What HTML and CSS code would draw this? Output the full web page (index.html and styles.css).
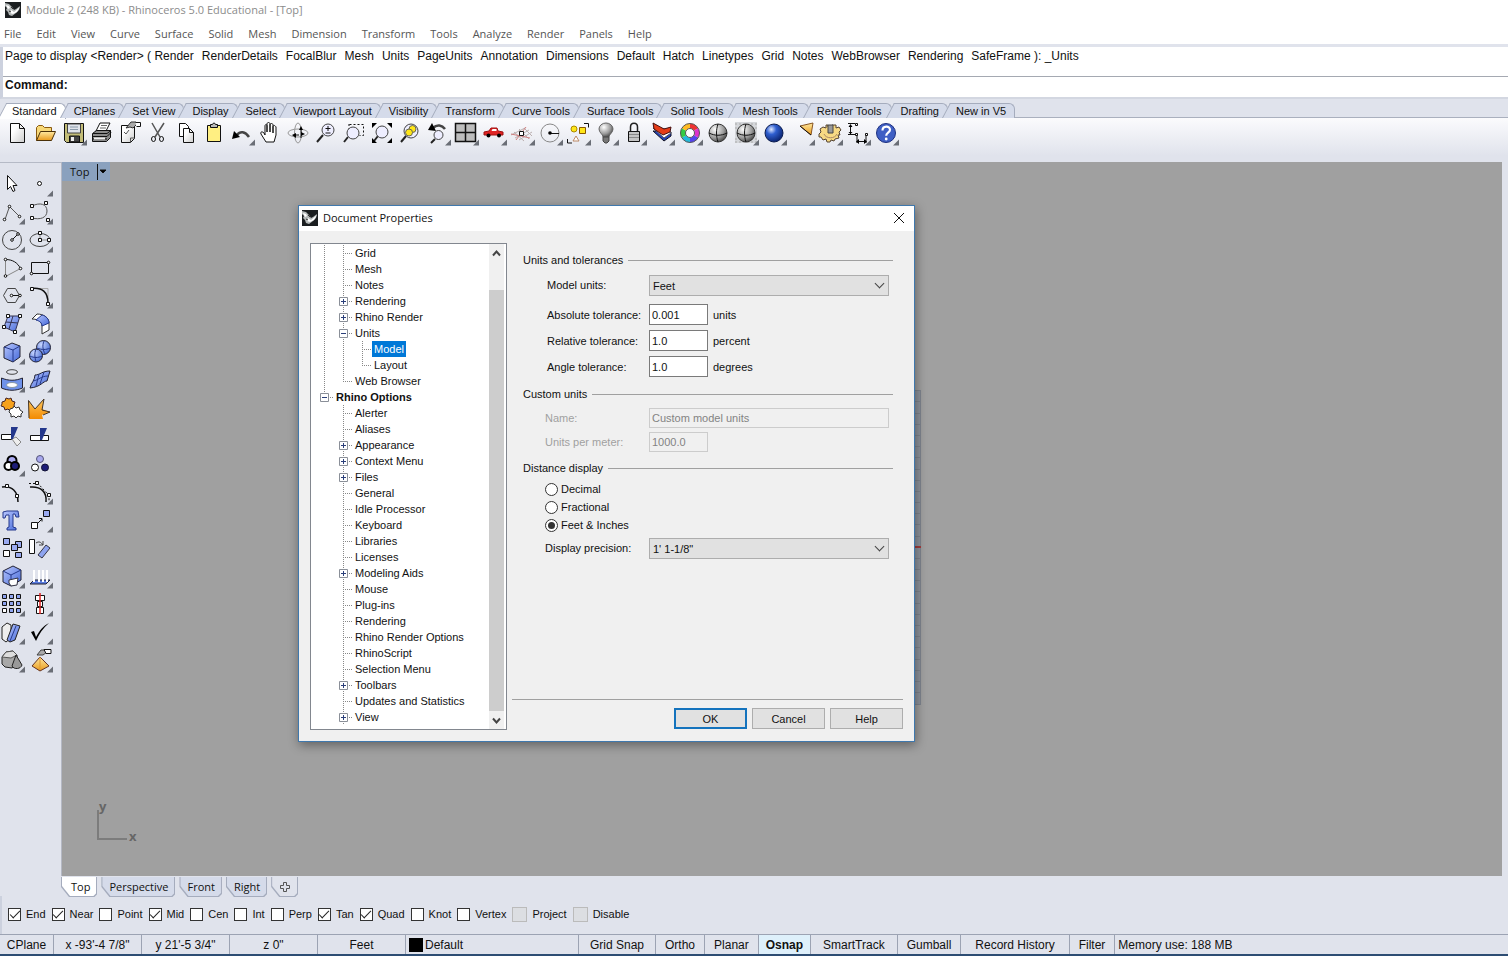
FILE: index.html
```html
<!DOCTYPE html>
<html lang="en">
<head>
<meta charset="utf-8">
<title>Module 2 (248 KB) - Rhinoceros 5.0 Educational - [Top]</title>
<link rel="stylesheet" href="styles.css">
</head>
<body>
<svg class="defs" width="0" height="0" aria-hidden="true">
  <defs>
    <linearGradient id="blue" x1="0" y1="0" x2="1" y2="1"><stop offset="0" stop-color="#b9c8ff"/><stop offset="1" stop-color="#4468d8"/></linearGradient>
    <linearGradient id="gold" x1="0" y1="0" x2="0" y2="1"><stop offset="0" stop-color="#ffe9a0"/><stop offset="1" stop-color="#e99a1c"/></linearGradient>
    <linearGradient id="flame" x1="0" y1="0" x2="0" y2="1"><stop offset="0" stop-color="#ffc860"/><stop offset="1" stop-color="#f28a00"/></linearGradient>
    <linearGradient id="paper" x1="0" y1="0" x2="1" y2="1"><stop offset="0.3" stop-color="#fff"/><stop offset="1" stop-color="#ccc"/></linearGradient>
    <radialGradient id="steel" cx="0.35" cy="0.3" r="0.8"><stop offset="0" stop-color="#fff"/><stop offset="0.6" stop-color="#999"/><stop offset="1" stop-color="#333"/></radialGradient>
    <radialGradient id="navy" cx="0.35" cy="0.3" r="0.8"><stop offset="0" stop-color="#dfe8ff"/><stop offset="0.35" stop-color="#2f5fd0"/><stop offset="1" stop-color="#051a60"/></radialGradient>
    <radialGradient id="ball" cx="0.35" cy="0.3" r="0.8"><stop offset="0" stop-color="#c8d6ff"/><stop offset="1" stop-color="#3c62d0"/></radialGradient>
  </defs>
  <symbol id="tri" viewBox="0 0 28 28"><path d="M25 20.500v6h-6z" fill="#6a6e76"/></symbol>
  <symbol id="rhino" viewBox="0 0 16 16"><path d="M0 0h16v16H0z" fill="#1b1e20"/><path d="M0 1l4 1 3 3 2 3 2-1 4-3-1 4-3 3-4 3-3-1-1-3-2-2 1-2-2-2z" fill="#b4b8b8"/><path d="M1 3l3 1 1 2-2 1zM6 8l3 2 6-5-3 5-4 2-3-1z" fill="#fff"/><path d="M6 5l2 2M4 9l2 1" stroke="#333" fill="none"/></symbol>
  <symbol id="v" viewBox="0 0 19 16"><path d="M9.500 0v16" class="dots"/></symbol>
  <symbol id="t" viewBox="0 0 19 16"><path d="M9.500 0v16M9 8.500h10" class="dots"/></symbol>
  <symbol id="l" viewBox="0 0 19 16"><path d="M9.500 0v9M9 8.500h10" class="dots"/></symbol>
  <symbol id="p" viewBox="0 0 19 16"><path d="M9.500 0v16M9 8.500h10" class="dots"/><path d="M5.500 4.500h8v8h-8z" fill="#fff" stroke="#8a8f98"/><path d="M7 8.500h5M9.500 6v5" stroke="#2b3f7a"/></symbol>
  <symbol id="m" viewBox="0 0 19 16"><path d="M9.500 0v16M9 8.500h10" class="dots"/><path d="M5.500 4.500h8v8h-8z" fill="#fff" stroke="#8a8f98"/><path d="M7 8.500h5" stroke="#2b3f7a"/></symbol>
  <symbol id="r" viewBox="0 0 19 16"><path d="M9.500 0v8M9 8.500h10" class="dots"/><path d="M5.500 4.500h8v8h-8z" fill="#fff" stroke="#8a8f98"/><path d="M7 8.500h5" stroke="#2b3f7a"/></symbol>
</svg>

<header class="titlebar"><svg class="logo"><use href="#rhino"/></svg><span>Module 2 (248 KB) - Rhinoceros 5.0 Educational - [Top]</span></header>
<nav class="menubar">
  <button>File</button><button>Edit</button><button>View</button><button>Curve</button><button>Surface</button><button>Solid</button><button>Mesh</button><button>Dimension</button><button>Transform</button><button>Tools</button><button>Analyze</button><button>Render</button><button>Panels</button><button>Help</button>
</nav>

<section class="command">
  <div class="history"><span>Page to display &lt;Render&gt; ( Render</span><span>RenderDetails</span><span>FocalBlur</span><span>Mesh</span><span>Units</span><span>PageUnits</span><span>Annotation</span><span>Dimensions</span><span>Default</span><span>Hatch</span><span>Linetypes</span><span>Grid</span><span>Notes</span><span>WebBrowser</span><span>Rendering</span><span>SafeFrame ): _Units</span></div>
  <div class="prompt"><label for="cmd">Command:</label><input id="cmd" type="text"></div>
</section>

<nav class="tabs">
  <button class="tab on">Standard</button><button class="tab">CPlanes</button><button class="tab">Set View</button><button class="tab">Display</button><button class="tab">Select</button><button class="tab">Viewport Layout</button><button class="tab">Visibility</button><button class="tab">Transform</button><button class="tab">Curve Tools</button><button class="tab">Surface Tools</button><button class="tab roomy">Solid Tools</button><button class="tab roomy">Mesh Tools</button><button class="tab roomy">Render Tools</button><button class="tab">Drafting</button><button class="tab">New in V5</button>
</nav>

<section class="toolbar">
  <button aria-label="New"><svg viewBox="0 0 28 28"><path d="M4.500 4.500h9l5 5v14h-14z" fill="url(#paper)" class="k"/><path d="M13.500 4.500v5h5" class="k"/></svg></button>
  <button aria-label="Open"><svg viewBox="0 0 28 28"><path d="M2.500 21.500v-13l2-2h4l2 2h7v4" fill="#f7d878" stroke="#8a5a10"/><path d="M2.500 21.500l4-9h15l-4 9z" fill="url(#gold)" stroke="#4a3008"/></svg></button>
  <button aria-label="Save"><svg viewBox="0 0 28 28"><path d="M2.500 4.500h19v19h-17l-2-2z" fill="#c3bd78" class="k"/><path d="M5.500 5v9h13V5z" fill="#dfe3ea" stroke="#444"/><path d="M8 8h8M8 10.500h8" stroke="#8a9aaa"/><path d="M7.500 23v-6h10v6z" fill="#444" class="k"/><path d="M9 18h3v4H9z" fill="#eee"/><use href="#tri"/></svg></button>
  <button aria-label="Print"><svg viewBox="0 0 28 28"><path d="M6 12l4-8h10l-4 8z" fill="#fff" class="k"/><path d="M11 6.500h6M10 9h6" stroke="#666"/><path d="M2.500 14.500l4-3h14v7l-4 4h-14z" fill="#8a8a8a" class="k"/><path d="M3 14.500h14l4-3M3 17.500h14l4-4M3 20h14" class="k"/><path d="M4 18.500h11v2H4z" fill="#eee"/></svg></button>
  <button aria-label="Document properties"><svg viewBox="0 0 28 28"><path d="M3.500 6.500h13v13l-4 4h-9z" fill="url(#paper)" class="k"/><path d="M12.500 23v-4h4M6 13l2 2 3-4" stroke="#555" fill="none"/><path d="M8 9l5-6h5l1 2-4 4-3-1z" fill="#aaa" stroke="#333"/><path d="M17.500 3.500h5v4h-4" fill="#fff" class="k"/></svg></button>
  <button aria-label="Cut"><svg viewBox="0 0 28 28"><path d="M6 4l8 14M18 4L9 18" stroke="#555" stroke-width="1.500"/><ellipse cx="7.500" cy="20" rx="2" ry="2.500" class="k"/><ellipse cx="15.500" cy="20" rx="2" ry="2.500" class="k"/></svg></button>
  <button aria-label="Copy"><svg viewBox="0 0 28 28"><path d="M5.500 4.500h6l3 3v10h-9z" fill="#fff" class="k"/><path d="M9.500 9.500h6l4 4v10h-10z" fill="url(#paper)" class="k"/><path d="M15.500 9.500v4h4" class="k"/></svg></button>
  <button aria-label="Paste"><svg viewBox="0 0 28 28"><path d="M5.500 6.500h13v16h-13z" fill="#ffef82" class="k"/><path d="M8.500 8.500v-3h2l1-1.500h1l1 1.500h2v3z" fill="#bbb" class="k"/></svg></button>
  <button aria-label="Undo"><svg viewBox="0 0 28 28"><path d="M7 16c3-4 8-4 12 2" fill="none" stroke="#444" stroke-width="2.500"/><path d="M2 20l2-8 6 6z"/><use href="#tri"/></svg></button>
  <button aria-label="Pan"><svg viewBox="0 0 28 28"><path d="M8 23l-5-8c-1-2 1-3 3-1l1 2V7c0-2 2-2 2 0v6-8c0-2 3-2 3 0v8-7c0-2 3-2 3 0v8-6c0-2 2-2 3 0v8l-2 7z" fill="#fff" class="k"/></svg></button>
  <button aria-label="Rotate view"><svg viewBox="0 0 28 28"><ellipse cx="12" cy="14" rx="10" ry="4" fill="none" stroke="#999"/><ellipse cx="12" cy="14" rx="3.500" ry="10" fill="none" stroke="#999"/><path d="M15 10v9M9 16h4" class="k"/><path d="M13 11h4l-2-4zM6 16l4-2v5zM15 13l4 2-4 2z"/></svg></button>
  <button aria-label="Zoom dynamic"><svg viewBox="0 0 28 28"><path d="M9 16l-6 7" class="k3"/><circle cx="14" cy="11" r="6" fill="#eef" stroke="#444"/><path d="M11.500 9.500h5M14 7v5M11.500 14h5" class="k"/></svg></button>
  <button aria-label="Zoom window"><svg viewBox="0 0 28 28"><path d="M7.500 5.500h14v11h-4M7 5v5" class="dash"/><path d="M6 18l-4 5" class="k3"/><circle cx="11" cy="14" r="6" fill="#eef" stroke="#444"/></svg></button>
  <button aria-label="Zoom extents"><svg viewBox="0 0 28 28"><path d="M8 17l-4 5" class="k3"/><circle cx="12" cy="13" r="6" fill="#eef" stroke="#444"/><path d="M2 4h5l-5 5zM22 4v5l-5-5zM2 24v-5l5 5zM22 24h-5l5-5z"/></svg></button>
  <button aria-label="Zoom selected"><svg viewBox="0 0 28 28"><path d="M8 17l-5 6" class="k3"/><circle cx="13" cy="12" r="7" fill="#eef" stroke="#444"/><circle cx="14.500" cy="10" r="3.500" fill="#ffe617" stroke="#665"/><circle cx="11" cy="13.500" r="3.500" fill="#ffe617" stroke="#665"/></svg></button>
  <button aria-label="Undo view"><svg viewBox="0 0 28 28"><path d="M7 9c4-4 9-3 12 1" fill="none" stroke="#444" stroke-width="2.500"/><path d="M2 11l4-7 4 8z"/><path d="M9 20l-4 4" class="k3"/><circle cx="12.500" cy="16" r="4.500" fill="#eef" stroke="#444"/><use href="#tri"/></svg></button>
  <button aria-label="Four viewports"><svg viewBox="0 0 28 28"><path d="M1.500 4.500h20v18h-20zM11.500 4v18M1 13.500h20" fill="#bdbdbd" class="k2"/><use href="#tri"/></svg></button>
  <button aria-label="Right view"><svg viewBox="0 0 28 28"><path d="M2 16v-3l5-1 2-3h6l1 3 5 1v3z" fill="#e02424" stroke="#a01010"/><path d="M9.500 12l1-2h4v2z" fill="#fff"/><circle cx="6.500" cy="16.500" r="2"/><circle cx="17" cy="16.500" r="2"/><use href="#tri"/></svg></button>
  <button aria-label="Set CPlane"><svg viewBox="0 0 28 28"><path d="M1 16l14-7M5 19l14-8M9 21l13-8M4 13l10 9M9 10l10 10M14 9l8 8" fill="none" stroke="#bbb0b0"/><path d="M1 15l19 4M6 21L16 8" stroke="#d08080"/><path d="M9.500 12.500h4v4h-4z" fill="#fff" class="k"/><use href="#tri"/></svg></button>
  <button aria-label="Object snap"><svg viewBox="0 0 28 28"><circle cx="12" cy="14" r="9" fill="none" stroke="#888"/><path d="M12 14.500h9" class="k"/><circle cx="12" cy="14" r="1.800"/><use href="#tri"/></svg></button>
  <button aria-label="Select objects"><svg viewBox="0 0 28 28"><path d="M18 4.500h4.500v4M1.500 20v4H6" class="k"/><circle cx="8" cy="10" r="3" fill="#ffe617" stroke="#a80"/><path d="M13.500 8.500h6v6h-6z" fill="#ffe617" stroke="#850"/><path d="M10 17l3 5H7z" fill="#fff" stroke="#b86"/><use href="#tri"/></svg></button>
  <button aria-label="Hide"><svg viewBox="0 0 28 28"><path d="M9 18c0-3-4-4-4-8a7 6 0 0 1 14 0c0 4-4 5-4 8z" fill="url(#steel)" stroke="#666"/><path d="M9 18h6v4l-2 2h-2l-2-2z" fill="#777" stroke="#444"/><use href="#tri"/></svg></button>
  <button aria-label="Lock"><svg viewBox="0 0 28 28"><path d="M8.500 13V8c0-5 7-5 7 0v5" fill="none" stroke="#222" stroke-width="1.500"/><path d="M6.500 12.500h11v10h-11z" fill="#c4c4c4" class="k"/><path d="M7 15.500h10M7 18.500h10" stroke="#888"/><use href="#tri"/></svg></button>
  <button aria-label="Layers"><svg viewBox="0 0 28 28"><path d="M3 12l11 10 7-5V13z" fill="#2342b8" stroke="#112"/><path d="M3 9l11 10 7-5-3-4z" fill="#fff" stroke="#556"/><path d="M3 4l11 6 7-2-1 5-7 3L4 10z" fill="#e53c18" stroke="#411"/><use href="#tri"/></svg></button>
  <button aria-label="Object properties"><svg viewBox="0 0 28 28"><g fill="none" stroke-width="5"><path d="M12 7a7 7 0 0 1 6 3.500" stroke="#e33"/><path d="M18 10.500a7 7 0 0 1 0 7" stroke="#d3c"/><path d="M18 17.500a7 7 0 0 1-6 3.500" stroke="#54e"/><path d="M12 21a7 7 0 0 1-6-3.500" stroke="#2bd"/><path d="M6 17.500a7 7 0 0 1 0-7" stroke="#3c4"/><path d="M6 10.500a7 7 0 0 1 6-3.500" stroke="#fb2"/></g><circle cx="12" cy="14" r="9.500" fill="none" stroke="#555"/><circle cx="12" cy="14" r="4.500" stroke="#555" fill="#fff"/><use href="#tri"/></svg></button>
  <button aria-label="Shade"><svg viewBox="0 0 28 28"><circle cx="12" cy="14" r="9" fill="url(#steel)" stroke="#333"/><path d="M3 14c6 3 12 3 18 0M12 5c-2 6-2 12 0 18" class="k"/></svg></button>
  <button aria-label="Render preview"><svg viewBox="0 0 28 28"><path d="M1 3h22v21H1z" fill="#d4d6da"/><path d="M1 5h22M1 9h22M1 20h22M1 23h22" class="dash pale"/><circle cx="12" cy="14" r="9" fill="url(#steel)" stroke="#333"/><path d="M3 14c6 3 12 3 18 0M12 5c-2 6-2 12 0 18" class="k"/><use href="#tri"/></svg></button>
  <button aria-label="Render"><svg viewBox="0 0 28 28"><circle cx="12" cy="14" r="9" fill="url(#navy)" stroke="#0a1c50"/><use href="#tri"/></svg></button>
  <button aria-label="Spotlight"><svg viewBox="0 0 28 28"><path d="M10 7l13-3-2 12z" fill="url(#gold)" stroke="#852"/><path d="M10 7l6 5 5 4" class="k"/><use href="#tri"/></svg></button>
  <button aria-label="Options"><svg viewBox="0 0 28 28"><path d="M8 6h2v2h4V6h4v3l3-1 2 3-2 2 1 3h-2l1 3-4 1-1 2-3-1-1 2h-3l-1-3-3 1-2-3H1v-3l2-2-1-3 3-2 3 1z" fill="#f7d983" stroke="#543"/><path d="M10 6h5v8h-5z" fill="#999" stroke="#444"/><path d="M6 15c2 5 11 5 13 0" fill="none" stroke="#a86"/><use href="#tri"/></svg></button>
  <button aria-label="Dimension"><svg viewBox="0 0 28 28"><path d="M2 4.500h7M4.500 6v9M2 15.500h7M11 15v9M20 16v8M11 22.500h9" class="k"/><path d="M2.500 8l2-3 2 3zM2.500 13l2 2 2-2zM13 20v5l-3-2.500zM18 20v5l3-2.500z"/><path d="M9.500 4.500h2v2h-2zM9.500 14.500h2v2h-2zM19.500 14.500h2v2h-2z" fill="#fff" class="k"/><use href="#tri"/></svg></button>
  <button aria-label="Help"><svg viewBox="0 0 28 28"><circle cx="12" cy="14" r="9.500" fill="#3f5fc4" stroke="#1c2f80"/><path d="M8.500 11.500c0-5 7.500-5 7.500-.8 0 3-3.800 3-3.800 6" fill="none" stroke="#fff" stroke-width="2.200"/><circle cx="12.200" cy="20" r="1.400" fill="#fff"/><use href="#tri"/></svg></button>
</section>

<main class="work">
  <aside class="palette">
    <button aria-label="Select"><svg viewBox="0 0 28 28"><path d="M7.500 5.500v14l3-3 2.500 5 2-1-2-5h4z" fill="#fff" class="k"/></svg></button>
    <button aria-label="Point"><svg viewBox="0 0 28 28"><circle cx="11.500" cy="13.500" r="2" fill="#fff" class="k"/><use href="#tri"/></svg></button>
    <button aria-label="Polyline"><svg viewBox="0 0 28 28"><path d="M5 21.500L9.500 8.500l10 10" fill="none" stroke="#555"/><g fill="#fff" class="k"><circle cx="4.500" cy="21.500" r="1.300"/><circle cx="9.500" cy="8.500" r="1.300"/><circle cx="19.500" cy="18.500" r="1.300"/></g><use href="#tri"/></svg></button>
    <button aria-label="Curve"><svg viewBox="0 0 28 28"><path d="M4 8c8-4 15-2 15 5s-7 9-15 7" fill="none" stroke="#555"/><path d="M2.500 6.500h3v3h-3zM16.500 3.500h3v3h-3zM2.500 18.500h3v3h-3zM18.500 20.500h3v3h-3z" fill="#fff" class="k"/><use href="#tri"/></svg></button>
    <button aria-label="Circle"><svg viewBox="0 0 28 28"><circle cx="12" cy="14" r="9.500" fill="none" stroke="#444"/><path d="M12 14l6-6" class="k"/><circle cx="12" cy="14" r="1.300" fill="#fff" class="k"/><circle cx="18" cy="8" r="1.300" fill="#fff" class="k"/><use href="#tri"/></svg></button>
    <button aria-label="Ellipse"><svg viewBox="0 0 28 28"><ellipse cx="12" cy="14" rx="10" ry="6.500" fill="none" stroke="#444"/><path d="M12 7v7h9" fill="none" stroke="#888"/><path d="M10.500 5.500h3v3h-3zM10.500 12.500h3v3h-3zM19.500 12.500h3v3h-3z" fill="#fff" class="k"/><use href="#tri"/></svg></button>
    <button aria-label="Arc"><svg viewBox="0 0 28 28"><path d="M5.500 5.500v17l15-8" fill="none" stroke="#888"/><path d="M5.500 5.500c7 0 12 3 15 9" class="k"/><g fill="#fff" class="k"><circle cx="5.500" cy="5.500" r="1.300"/><circle cx="5.500" cy="22" r="1.300"/><circle cx="20.500" cy="14.500" r="1.300"/></g><use href="#tri"/></svg></button>
    <button aria-label="Rectangle"><svg viewBox="0 0 28 28"><path d="M3.500 8.500h17v11h-17z" class="k"/><circle cx="20.500" cy="8.500" r="1.300" fill="#fff" class="k"/><circle cx="3.500" cy="19.500" r="1.300" fill="#fff" class="k"/><use href="#tri"/></svg></button>
    <button aria-label="Polygon"><svg viewBox="0 0 28 28"><path d="M3.500 13.500l4-7h8l4 7-4 7h-8z" fill="none" stroke="#444"/><path d="M12 13.500h8" class="k"/><circle cx="11.500" cy="13.500" r="1.300" fill="#fff" class="k"/><circle cx="20" cy="13.500" r="1.300" fill="#fff" class="k"/><use href="#tri"/></svg></button>
    <button aria-label="Fillet"><svg viewBox="0 0 28 28"><path d="M4 6.500h16v15" fill="none" stroke="#aaa"/><path d="M4 6.500c10-1 16 3 16 15" class="k2"/><path d="M2.500 5.500h3v3h-3zM18.500 20.500h3v3h-3z" fill="#fff" class="k"/><use href="#tri"/></svg></button>
    <button aria-label="Surface from points"><svg viewBox="0 0 28 28"><path d="M8 6h12l-5 16-11-5z" fill="url(#blue)" stroke="#335"/><path d="M13 6L9 19M6 12l12 1" fill="none" stroke="#335"/><path d="M6.500 4.500h3v3h-3zM18.500 4.500h3v3h-3zM2.500 15.500h3v3h-3zM13.500 20.500h3v3h-3z" fill="#fff" class="k"/><use href="#tri"/></svg></button>
    <button aria-label="Extrude curve"><svg viewBox="0 0 28 28"><path d="M4 9l5-5c7 0 12 4 12 9v7l-7 4v-8c0-4-4-7-10-7z" fill="#fff" stroke="#333"/><path d="M8 10l6-5c4 1 7 4 7 8l-7 3c0-3-2-5-6-6z" fill="url(#blue)" stroke="#24388c"/><use href="#tri"/></svg></button>
    <button aria-label="Box"><svg viewBox="0 0 28 28"><path d="M4 9l8-4 8 3v11l-7 5-9-4z" fill="url(#blue)" stroke="#223"/><path d="M4 9l9 3 7-4M13 12v12" fill="none" stroke="#24388c"/><use href="#tri"/></svg></button>
    <button aria-label="Boolean union"><svg viewBox="0 0 28 28"><circle cx="15.500" cy="9.500" r="7" fill="url(#ball)" stroke="#223"/><circle cx="8" cy="17.500" r="6.500" fill="url(#ball)" stroke="#223"/><path d="M9 10c5 2 9 2 13 0M16 3c-2 5-1 9 1 13M2 18c4 2 8 2 12 0M8 11c-2 5-1 9 0 13" fill="none" stroke="#24388c"/><use href="#tri"/></svg></button>
    <button aria-label="Project to surface"><svg viewBox="0 0 28 28"><ellipse cx="12" cy="6" rx="5.500" ry="2.300" fill="none" stroke="#444"/><path d="M1.500 12c7 3 14 3 21 0v10c-7 3-14 3-21 0z" fill="#6f92ea" stroke="#223"/><ellipse cx="12" cy="19" rx="5.500" ry="2.500" fill="#fff" stroke="#89a"/><use href="#tri"/></svg></button>
    <button aria-label="Mesh"><svg viewBox="0 0 28 28"><path d="M7 9c5 0 7-4 15-4l-3 10c-4 0-6 6-17 7 1-5 5-8 5-13z" fill="url(#blue)" stroke="#223"/><path d="M11 8l-3 12M16 6l-4 12M5 15c6-1 8-5 15-5" fill="none" stroke="#24388c"/><use href="#tri"/></svg></button>
    <button aria-label="Join"><svg viewBox="0 0 28 28"><path d="M2 8l3-1 1-3 3 1 2-1 1 3 3 1-1 3 1 3-3 1-2 2-2-2-3 1-1-3-3-1 1-2z" fill="#f5a11c" stroke="#422"/><path d="M10 15l3-1 1-2 2 2 3-1 1 3 3 2-2 2v3l-3-1-2 2-2-2-3 1v-3l-2-2z" fill="#fff" stroke="#333"/></svg></button>
    <button aria-label="Explode"><svg viewBox="0 0 28 28"><path d="M1 25L.5 6.500 7 15l9-10-2 10 8 3-8 3 1 4z" fill="url(#flame)"/><path d="M1 24L.5 6.500 7 15l9-10-2 11 8 2-7 3" fill="none" stroke="#432"/></svg></button>
    <button aria-label="Trim"><svg viewBox="0 0 28 28"><path d="M1.500 12.500h10v5h-10z" fill="#fff" class="k"/><path d="M12 17l4-2 5 5-4 4z" fill="#eee" stroke="#888"/><path d="M11 5h7l-5 12h-2z" fill="#24388c"/></svg></button>
    <button aria-label="Split"><svg viewBox="0 0 28 28"><path d="M2.500 13.500h18v5h-18z" fill="#fff" class="k"/><path d="M12 6h7l-5 12h-2z" fill="#24388c"/></svg></button>
    <button aria-label="Group"><svg viewBox="0 0 28 28"><g stroke="#000" stroke-width="2"><circle cx="12" cy="10.500" r="4.500" fill="#a8a8ee"/><circle cx="8.500" cy="16" r="4" fill="#fff"/><circle cx="15" cy="16" r="4" fill="#1d1d78"/></g><use href="#tri"/></svg></button>
    <button aria-label="Ungroup"><svg viewBox="0 0 28 28"><circle cx="12" cy="9" r="3.500" fill="#a8a8ee" stroke="#557"/><circle cx="7" cy="17.500" r="3.500" fill="#fff" class="k"/><circle cx="17" cy="17.500" r="3.500" fill="#1d1d78" stroke="#113"/></svg></button>
    <button aria-label="Edit points"><svg viewBox="0 0 28 28"><path d="M2 9c10-2 16 5 16 15" class="k2"/><path d="M5.500 6.500h3v3h-3zM15.500 16.500h3v3h-3z" fill="#fff" class="k"/></svg></button>
    <button aria-label="Control points"><svg viewBox="0 0 28 28"><path d="M2 9c11-1 17 5 16 15" class="k2"/><path d="M1 5.500h9l11 12v6" class="dash"/><path d="M7.500 3.500h3v3h-3zM19.500 15.500h3v3h-3z" fill="#fff" class="k"/><use href="#tri"/></svg></button>
    <button aria-label="Text"><svg viewBox="0 0 28 28"><path d="M3 6l4-1h11l1 6h-3l-1-3h-2v13l3 1v2H7v-2l2-1V9H6l-1 3H3z" fill="url(#blue)" stroke="#24388c"/></svg></button>
    <button aria-label="Move"><svg viewBox="0 0 28 28"><path d="M9 18l5-5M11 12.500h3v3" class="k"/><path d="M15.500 4.500h6v6h-6z" fill="#9aaaf0" class="k"/><path d="M3.500 16.500h6v6h-6z" fill="#fff" class="k"/><use href="#tri"/></svg></button>
    <button aria-label="Copy objects"><svg viewBox="0 0 28 28"><g class="k"><path d="M3.500 4.500h6v6h-6zM15.500 7.500h6v6h-6z" fill="#9aaaf0"/><path d="M11.500 10.500h6v6h-6zM15.500 18.500h6v5h-6z" fill="#9aaaf0"/><path d="M3.500 16.500h6v6h-6z" fill="#fff"/></g></svg></button>
    <button aria-label="Rotate"><svg viewBox="0 0 28 28"><path d="M1.500 5.500h5v14h-5z" fill="#fff" class="k"/><path d="M8 9c3-2 5-1 7 2M15 7v4h-4" fill="none" stroke="#444"/><path d="M18 11l4 3-8 10-4-3z" fill="#8ea4f0" stroke="#334"/></svg></button>
    <button aria-label="Solid edit"><svg viewBox="0 0 28 28"><path d="M3 9l10-5 8 4v10l-10 6-8-4z" fill="url(#blue)" stroke="#223"/><path d="M3 9l8 4 10-5M11 13v11" fill="none" stroke="#24388c"/><path d="M9 18l9-2-1 7-6 1-2-3z" fill="#fff" stroke="#334"/><use href="#tri"/></svg></button>
    <button aria-label="Project"><svg viewBox="0 0 28 28"><path d="M2 22l4-4h16l-4 4z" fill="#5a7ce0" stroke="#223"/><path d="M6 8v12M11 8v12M15 8v12M19 8v12" stroke="#fff" stroke-width="2"/><use href="#tri"/></svg></button>
    <button aria-label="Array"><svg viewBox="0 0 28 28"><path d="M2.500 4.500h4v4h-4zM9.500 4.500h4v4h-4zM16.500 4.500h4v4h-4zM2.500 11.500h4v4h-4zM9.500 11.500h4v4h-4zM16.500 11.500h4v4h-4zM9.500 18.500h4v4h-4zM16.500 18.500h4v4h-4z" fill="#8ea4f0" class="k"/><path d="M2.500 18.500h4v4h-4z" fill="#fff" class="k"/><use href="#tri"/></svg></button>
    <button aria-label="Align"><svg viewBox="0 0 28 28"><path d="M7.500 5.500h9v5h-9zM9.500 11.500h5v5h-5zM8.500 17.500h7v6h-7z" fill="#fff" class="k"/><path d="M12 3v21" stroke="#d22" stroke-width="1.500"/><use href="#tri"/></svg></button>
    <button aria-label="Bend"><svg viewBox="0 0 28 28"><path d="M2 9l5-4 4 2v13l-5 4-4-3z" fill="#eee" stroke="#222"/><path d="M13 6l7 2-5 14-5 2-3-2z" fill="url(#blue)" stroke="#222"/><path d="M16 8l-6 15" stroke="#24388c"/><use href="#tri"/></svg></button>
    <button aria-label="Check"><svg viewBox="0 0 28 28"><path d="M3 14l3-1 2 6c4-7 7-11 13-14C15 10 11 16 8 23z"/><use href="#tri"/></svg></button>
    <button aria-label="Primitives"><svg viewBox="0 0 28 28"><path d="M2 11l4-5 7-1 4 4v9l-5 4-7-1-3-3z" fill="#a8a8a8" stroke="#222"/><path d="M2 11l4-5 7-1 4 4-6 3z" fill="#ddd" stroke="#555"/><path d="M16 9l6 10c-1 4-8 5-10 1z" fill="#999" stroke="#222"/><use href="#tri"/></svg></button>
    <button aria-label="Pyramid"><svg viewBox="0 0 28 28"><path d="M4 20l8-9 9 9-9 5z" fill="url(#gold)" stroke="#632"/><path d="M12 11v13" stroke="#d93"/><path d="M9 9l4-5h4l2 2-4 3z" fill="#aaa" stroke="#444"/><path d="M16 3.500h7v4h-5z" fill="#fff" class="k"/><use href="#tri"/></svg></button>
  </aside>
  <section class="viewport">
    <button class="vtitle"><span>Top</span><svg viewBox="0 0 10 16"><path d="M.5 0v16"/><path d="M3 6h6L6 9z"/></svg></button>
    <svg class="grid" viewBox="0 0 8 316" preserveAspectRatio="none"><path d="M0 0h7v315H0z" fill="#8e939d"/><path d="M0 .5h7M0 11.500h7M0 23.500h7M0 34.500h7M0 45.500h7M0 56.500h7M0 67.500h7M0 79.500h7M0 90.500h7M0 101.500h7M0 112.500h7M0 123.500h7M0 134.500h7M0 146.500h7M0 168.500h7M0 179.500h7M0 190.500h7M0 201.500h7M0 213.500h7M0 224.500h7M0 235.500h7M0 246.500h7M0 257.500h7M0 269.500h7M0 280.500h7M0 291.500h7M0 302.500h7M0 314.500h7M6.500 0v315" stroke="#7f858f"/><path d="M0 157h7" stroke="#a33c3c" stroke-width="2"/></svg>
    <svg class="axes" viewBox="0 0 50 50"><path d="M6 12v29h29" fill="none" stroke="#7c7c7c" stroke-width="2"/><text x="7" y="13">y</text><text x="37" y="43">x</text></svg>
  </section>
</main>

<nav class="vtabs"><button class="vtab on">Top</button><button class="vtab">Perspective</button><button class="vtab">Front</button><button class="vtab">Right</button><button class="vtab add" aria-label="New viewport"><svg viewBox="0 0 10 10"><path d="M3.500.5h3v3h3v3h-3v3h-3v-3h-3v-3h3z"/></svg></button></nav>

<section class="osnap">
  <label><input type="checkbox" checked>End</label><label><input type="checkbox" checked>Near</label><label><input type="checkbox">Point</label><label><input type="checkbox" checked>Mid</label><label><input type="checkbox">Cen</label><label><input type="checkbox">Int</label><label><input type="checkbox">Perp</label><label><input type="checkbox" checked>Tan</label><label><input type="checkbox" checked>Quad</label><label><input type="checkbox">Knot</label><label><input type="checkbox">Vertex</label><label><input type="checkbox" disabled>Project</label><label><input type="checkbox" disabled>Disable</label>
</section>

<footer class="status">
  <button class="cell first">CPlane</button><span class="cell coord">x -93'-4 7/8"</span><span class="cell coord">y 21'-5 3/4"</span><span class="cell coord">z 0"</span><span class="cell coord">Feet</span><button class="cell layer"><i></i>Default</button><button class="cell">Grid Snap</button><button class="cell snug">Ortho</button><button class="cell snug">Planar</button><button class="cell on">Osnap</button><button class="cell mid">SmartTrack</button><button class="cell snug">Gumball</button><button class="cell wide">Record History</button><button class="cell snug">Filter</button><span class="cell memory">Memory use: 188 MB</span>
</footer>

<form class="dialog" role="dialog" aria-labelledby="dlg">
  <header class="dhead"><svg class="logo"><use href="#rhino"/></svg><h1 id="dlg">Document Properties</h1><button type="button" class="close" aria-label="Close"><svg viewBox="0 0 12 12"><path d="M1 1l10 10M11 1L1 11"/></svg></button></header>
  <div class="dbody">
    <div class="treebox">
      <ul class="tree">
        <li><svg><use href="#v"/></svg><svg><use href="#t"/></svg><span>Grid</span></li>
        <li><svg><use href="#v"/></svg><svg><use href="#t"/></svg><span>Mesh</span></li>
        <li><svg><use href="#v"/></svg><svg><use href="#t"/></svg><span>Notes</span></li>
        <li><svg><use href="#v"/></svg><svg><use href="#p"/></svg><span>Rendering</span></li>
        <li><svg><use href="#v"/></svg><svg><use href="#p"/></svg><span>Rhino Render</span></li>
        <li><svg><use href="#v"/></svg><svg><use href="#m"/></svg><span>Units</span></li>
        <li><svg><use href="#v"/></svg><svg><use href="#v"/></svg><svg><use href="#t"/></svg><span class="sel">Model</span></li>
        <li><svg><use href="#v"/></svg><svg><use href="#v"/></svg><svg><use href="#l"/></svg><span>Layout</span></li>
        <li><svg><use href="#v"/></svg><svg><use href="#l"/></svg><span>Web Browser</span></li>
        <li><svg><use href="#r"/></svg><span class="root">Rhino Options</span></li>
        <li><svg></svg><svg><use href="#t"/></svg><span>Alerter</span></li>
        <li><svg></svg><svg><use href="#t"/></svg><span>Aliases</span></li>
        <li><svg></svg><svg><use href="#p"/></svg><span>Appearance</span></li>
        <li><svg></svg><svg><use href="#p"/></svg><span>Context Menu</span></li>
        <li><svg></svg><svg><use href="#p"/></svg><span>Files</span></li>
        <li><svg></svg><svg><use href="#t"/></svg><span>General</span></li>
        <li><svg></svg><svg><use href="#t"/></svg><span>Idle Processor</span></li>
        <li><svg></svg><svg><use href="#t"/></svg><span>Keyboard</span></li>
        <li><svg></svg><svg><use href="#t"/></svg><span>Libraries</span></li>
        <li><svg></svg><svg><use href="#t"/></svg><span>Licenses</span></li>
        <li><svg></svg><svg><use href="#p"/></svg><span>Modeling Aids</span></li>
        <li><svg></svg><svg><use href="#t"/></svg><span>Mouse</span></li>
        <li><svg></svg><svg><use href="#t"/></svg><span>Plug-ins</span></li>
        <li><svg></svg><svg><use href="#t"/></svg><span>Rendering</span></li>
        <li><svg></svg><svg><use href="#t"/></svg><span>Rhino Render Options</span></li>
        <li><svg></svg><svg><use href="#t"/></svg><span>RhinoScript</span></li>
        <li><svg></svg><svg><use href="#t"/></svg><span>Selection Menu</span></li>
        <li><svg></svg><svg><use href="#p"/></svg><span>Toolbars</span></li>
        <li><svg></svg><svg><use href="#t"/></svg><span>Updates and Statistics</span></li>
        <li><svg></svg><svg><use href="#p"/></svg><span>View</span></li>
      </ul>
      <div class="scroll"><button type="button" aria-label="Scroll up"><svg viewBox="0 0 9 9"><path d="M1 6.500l3.500-4 3.500 4"/></svg></button><i></i><button type="button" aria-label="Scroll down"><svg viewBox="0 0 9 9"><path d="M1 2.500l3.500 4 3.500-4"/></svg></button></div>
    </div>
    <div class="pane">
      <div class="groups">
        <h2>Units and tolerances</h2>
        <div class="fields">
          <label for="units">Model units:</label><div class="combo"><select id="units"><option>Feet</option></select></div>
          <label for="abs">Absolute tolerance:</label><div class="val"><input id="abs" type="text" value="0.001">units</div>
          <label for="rel">Relative tolerance:</label><div class="val"><input id="rel" type="text" value="1.0">percent</div>
          <label for="ang">Angle tolerance:</label><div class="val"><input id="ang" type="text" value="1.0">degrees</div>
        </div>
        <h2>Custom units</h2>
        <div class="fields off">
          <label for="nm">Name:</label><div class="val"><input id="nm" class="full" type="text" value="Custom model units" disabled></div>
          <label for="upm">Units per meter:</label><div class="val"><input id="upm" type="text" value="1000.0" disabled></div>
        </div>
        <h2>Distance display</h2>
        <div class="radios">
          <label><input type="radio" name="dd">Decimal</label>
          <label><input type="radio" name="dd">Fractional</label>
          <label><input type="radio" name="dd" checked>Feet &amp; Inches</label>
        </div>
        <div class="fields last"><label for="prec">Display precision:</label><div class="combo"><select id="prec"><option>1' 1-1/8"</option></select></div></div>
      </div>
      <div class="actions"><button type="button" class="ok">OK</button><button type="button">Cancel</button><button type="button">Help</button></div>
    </div>
  </div>
</form>
</body>
</html>
```
FILE: styles.css
```css
* { box-sizing: border-box; }
body {
  margin: 0;
  min-height: 100vh;
  position: relative;
  display: flex;
  flex-direction: column;
  background: #e0e3ec;
  color: #111;
  font: 11px/16px "Liberation Sans", Arial, sans-serif;
}
button { margin: 0; padding: 0; border: 0; background: none; color: inherit; font: inherit; }
input, select { font: inherit; color: inherit; margin: 0; }
svg { display: block; }
.defs { position: absolute; }
.dots { fill: none; stroke: #888; stroke-dasharray: 1 1; }
.k { stroke: #111; }
.k:not([fill]) { fill: none; }
.k2 { stroke: #111; stroke-width: 1.5; }
.k2:not([fill]) { fill: none; }
.k3 { stroke: #222; stroke-width: 2; fill: none; }
.dash { stroke: #111; fill: none; stroke-dasharray: 2 2; }
.dash.pale { stroke: #aaa; }
.logo { width: 16px; height: 16px; }

.titlebar {
  display: flex; align-items: center; gap: 5px; height: 20px; padding-left: 5px;
  background: #fff; color: #8c8c8c; font: 11px/20px "Open Sans", "Noto Sans", sans-serif;
}
.menubar {
  display: flex; align-items: center; gap: 15px; height: 27px; padding: 4px 4px 0;
  background: #fff; border-bottom: 3px solid #e0e3ec; color: #555;
  font: 11px/20px "Open Sans", "Noto Sans", sans-serif;
}
.command { background: #fff; border-left: 3px solid #ccd1de; border-bottom: 2px solid #d3d7e1; font-size: 12px; }
.history { display: flex; gap: 8px; height: 30px; padding: 1px 2px; white-space: pre; border-bottom: 1px solid #a5a9b2; }
.prompt { display: flex; height: 20px; padding: 0 2px; font-weight: bold; }
.prompt input { flex: 1; border: 0; padding: 0 4px; outline: 0; }

.tabs { display: flex; height: 19px; padding: 4px 0 0 4px; border-bottom: 1px solid #aab0be; }
.tab { position: relative; isolation: isolate; height: 15px; padding: 0 9px 0 8px; line-height: 16px; white-space: nowrap; }
.tab.roomy { padding-right: 11px; }
.tab::before, .tab::after { content: ""; position: absolute; z-index: -1; top: 0; bottom: 0; background: #d5dbea; border-top: 1px solid #a5acbd; }
.tab::before { left: -2px; width: 50%; border-left: 1px solid #a5acbd; transform: skewX(-28deg); }
.tab::after { left: 30%; right: 0; border-right: 1px solid #a5acbd; border-radius: 0 6px 0 0; }
.tab.on::before, .tab.on::after { background: #fff; bottom: -1px; }
.toolbar { display: flex; height: 42px; padding: 1px 6px; background: linear-gradient(#fbfbfd, #e0e3ec 90%); }
.toolbar button, .palette button { width: 28px; height: 28px; }
.toolbar svg, .palette svg { width: 28px; height: 28px; }

.work { flex: 1; display: flex; padding: 2px 6px 0 0; }
.palette { display: grid; grid-template-columns: 28px 28px; grid-auto-rows: 28px; width: 61px; padding-top: 7px; border-top: 1px solid #b5bac6; align-content: start; }
.viewport { flex: 1; position: relative; background: #a0a0a0; border-left: 1px solid #b4b8c4; }
.vtitle { display: flex; align-items: center; gap: 8px; height: 19px; padding: 0 3px 0 8px; background: #8aa1be; font: 11px/19px "Open Sans", "Noto Sans", sans-serif; }
.vtitle svg { width: 10px; height: 16px; stroke: #111; }
.grid { position: absolute; left: 852px; top: 228px; width: 8px; height: 316px; }
.axes { position: absolute; left: 30px; bottom: 28px; width: 50px; height: 50px; font: bold 13px "Open Sans", sans-serif; fill: #666; }

.vtabs { display: flex; gap: 4px; height: 22px; padding: 1px 0 0 61px; font: 11px/20px "Open Sans", "Noto Sans", sans-serif; }
.vtab { position: relative; isolation: isolate; height: 20px; padding: 0 7px 0 8px; }
.vtab.on { padding-left: 10px; }
.vtab::before, .vtab::after {
  content: ""; position: absolute; z-index: -1; inset: 0; background: #a5acbd;
  clip-path: polygon(0 0, 100% 0, 100% calc(100% - 3px), calc(100% - 3px) 100%, 8px 100%, 0 calc(100% - 10px));
}
.vtab::after { inset: 0 1px 1px 1px; background: #d5dbea; }
.vtab.on::after { background: #fff; }
.vtab.add { width: 27px; padding-left: 9px; }
.vtab.add::after { background: #e0e3ec; }
.vtab.add svg { width: 10px; height: 10px; fill: none; stroke: #555; }

.osnap { display: flex; align-items: center; gap: 6px; height: 38px; padding: 0 0 2px 6px; margin-top: -2px; border-left: 2px solid #ccd1de; }
.osnap label { display: flex; align-items: center; gap: 5px; }
.osnap input { appearance: none; width: 13px; height: 13px; border: 1px solid #333; background: #fff; display: grid; place-items: center; }
.osnap input:checked::after { content: ""; width: 9px; height: 4px; border: solid #222; border-width: 0 0 1px 1px; transform: rotate(-45deg) translate(1px, -1px); }
.osnap input:disabled { width: 15px; height: 15px; border-color: #bbb; background: #dcdee2; }

.status { display: flex; height: 22px; border-top: 1px solid #9ca3b3; border-bottom: 2px solid #2d4d73; font-size: 12px; line-height: 20px; }
.cell { height: 19px; padding: 0 11px; border-right: 1px solid #9ca3b3; text-align: center; white-space: nowrap; }
.cell.first { width: 54px; padding: 0 4px; }
.cell.coord { width: 88px; padding: 0; }
.cell.layer { width: 173px; padding: 0 3px; display: flex; align-items: center; gap: 2px; }
.cell.layer i { width: 14px; height: 14px; background: #000; }
.cell.snug { padding: 0 9px; }
.cell.on { padding: 0 7px; background: #def0fb; font-weight: bold; }
.cell.mid { padding: 0 12px; }
.cell.wide { padding: 0 14px; }
.cell.memory { border: 0; padding: 0 3px; }

.dialog { position: absolute; left: 298px; top: 205px; width: 617px; background: #f0f0f0; border: 1px solid #3f78ad; box-shadow: 1px 3px 10px rgba(0, 0, 0, .4); }
.dhead { display: flex; align-items: center; height: 25px; padding: 0 9px 2px 3px; gap: 5px; background: #fff; }
.dhead h1 { flex: 1; margin: 0; font: 11px/16px "Open Sans", "Noto Sans", sans-serif; }
.close svg { width: 12px; height: 12px; stroke: #111; }
.dbody { display: flex; gap: 5px; padding: 12px 11px 11px; }
.treebox { display: flex; width: 197px; background: #fff; border: 1px solid #82878f; padding: 0 2px 0 4px; }
.tree { flex: 1; margin: 0; padding: 1px 0 4px; list-style: none; white-space: nowrap; }
.tree li { display: flex; height: 16px; }
.tree svg { width: 19px; height: 16px; flex: none; }
.tree span { padding: 0 2px; }
.tree .sel { background: #0078d7; color: #fff; }
.tree .root { font-weight: bold; }
.scroll { display: flex; flex-direction: column; width: 15px; background: #f0f0f0; }
.scroll button { height: 18px; display: grid; place-items: center; }
.scroll svg { width: 9px; height: 9px; fill: none; stroke: #444; stroke-width: 2; }
.scroll i { flex: 1; margin-top: 28px; background: #cdcdcd; }
.pane { flex: 1; display: flex; flex-direction: column; justify-content: space-between; }
.groups { padding: 9px 10px 0 11px; }
.groups h2 { display: flex; align-items: center; gap: 5px; margin: 0; font: inherit; }
.groups h2::after { content: ""; flex: 1; height: 1px; background: #a0a0a0; }
.fields { display: grid; grid-template-columns: 102px 1fr; align-items: center; gap: 5px 0; padding: 7px 4px 9px 24px; }
.fields:not(.off) label:first-child { margin-bottom: 4px; }
.fields.off { grid-template-columns: 104px 1fr; gap: 4px 0; padding: 6px 4px 8px 22px; color: #a0a0a0; }
.fields.last { grid-template-columns: 104px 1fr; padding: 5px 4px 0 22px; }
.combo { position: relative; margin-bottom: 3px; }
.combo select { appearance: none; width: 100%; height: 21px; padding: 0 3px; border: 1px solid #adadad; border-radius: 0; background: #e1e1e1; display: block; }
.combo::after { content: ""; position: absolute; right: 6px; top: 5px; width: 6px; height: 6px; border: solid #444; border-width: 0 1px 1px 0; transform: rotate(45deg); pointer-events: none; }
.val { display: flex; align-items: center; gap: 5px; }
.val input { width: 59px; height: 21px; padding: 0 2px; border: 1px solid #7a7a7a; background: #fff; }
.val input:disabled { height: 20px; background: #f0f0f0; border-color: #ccc; color: #838383; }
.val input.full { width: 100%; }
.radios { display: grid; gap: 2px; padding: 5px 0 0 22px; }
.radios label { display: flex; align-items: center; gap: 3px; }
.radios input { appearance: none; width: 13px; height: 13px; border: 1px solid #333; border-radius: 50%; background: #fff; display: grid; place-items: center; }
.radios input:checked::after { content: ""; width: 7px; height: 7px; border-radius: 50%; background: #333; }
.actions { display: flex; justify-content: flex-end; gap: 5px; padding: 8px 0 1px; border-top: 1px solid #a0a0a0; }
.actions button { width: 73px; height: 21px; background: #e1e1e1; border: 1px solid #adadad; }
.actions .ok { border: 2px solid #1473bd; }
```
